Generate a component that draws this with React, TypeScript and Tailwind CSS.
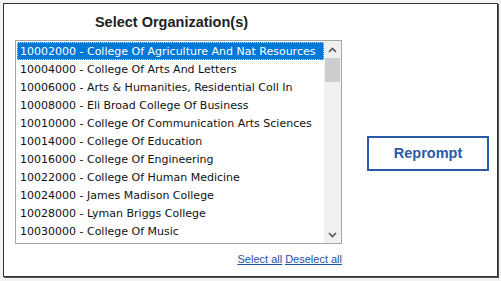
import React from 'react';

const orgs = [
  '10002000 - College Of Agriculture And Nat Resources',
  '10004000 - College Of Arts And Letters',
  '10006000 - Arts & Humanities, Residential Coll In',
  '10008000 - Eli Broad College Of Business',
  '10010000 - College Of Communication Arts Sciences',
  '10014000 - College Of Education',
  '10016000 - College Of Engineering',
  '10022000 - College Of Human Medicine',
  '10024000 - James Madison College',
  '10028000 - Lyman Briggs College',
  '10030000 - College Of Music',
];

const Chevron = ({ up }: { up?: boolean }) => (
  <svg width="9" height="6" viewBox="0 0 9 6" className="block">
    <path
      d={up ? 'M1 5 L4.5 1.5 L8 5' : 'M1 1 L4.5 4.5 L8 1'}
      fill="none"
      stroke="#555"
      strokeWidth="1.6"
    />
  </svg>
);

export default function App() {
  return (
    <div className="w-[501px] h-[281px] bg-[#f3f3f3] pt-[3px] pl-[3px] font-['Liberation_Sans',Arial,sans-serif]">
      <div className="w-[495px] h-[274px] bg-white border border-[#333] shadow-[1px_1px_0_#555] flex">
        {/* left column */}
        <div className="flex flex-col pl-[11px] w-[338px]">
          <div className="h-[36px] flex items-center justify-center pt-[1px] pr-[14px] text-[14.5px] font-bold text-[#222]">
            Select Organization(s)
          </div>
          <div className="h-[204px] border border-[#a6a6a6] flex">
            <div className="flex-1 pt-[1px] pl-[1px] overflow-hidden font-['DejaVu_Sans',Verdana,sans-serif]">
              {orgs.map((o, i) => (
                <div
                  key={o}
                  className={`h-[18px] pt-[2px] leading-[16px] pl-[3px] whitespace-nowrap text-[11px] ${
                    i === 0
                      ? 'bg-[#0078d7] text-white outline outline-1 outline-dotted outline-[#b8d8f5] -outline-offset-1'
                      : 'text-[#111]'
                  }`}
                >
                  {o}
                </div>
              ))}
            </div>
            <div className="w-[17px] bg-[#f0f0f0] flex flex-col items-center">
              <div className="h-[17px] flex items-center justify-center">
                <Chevron up />
              </div>
              <div className="w-[15px] h-[24px] bg-[#cdcdcd]" />
              <div className="flex-1" />
              <div className="h-[17px] flex items-center justify-center">
                <Chevron />
              </div>
            </div>
          </div>
          <div className="flex justify-end gap-[3px] mt-[7px] text-[11px] text-[#1f4fa6] underline">
            <a href="#">Select all</a>
            <a href="#">Deselect all</a>
          </div>
        </div>
        {/* right column */}
        <div className="flex-1 pt-[132px] pl-[25px]">
          <button className="w-[122px] h-[35px] border-2 border-[#2a5aa8] bg-white text-[#2a5aa8] font-bold text-[14.5px]">
            Reprompt
          </button>
        </div>
      </div>
    </div>
  );
}
